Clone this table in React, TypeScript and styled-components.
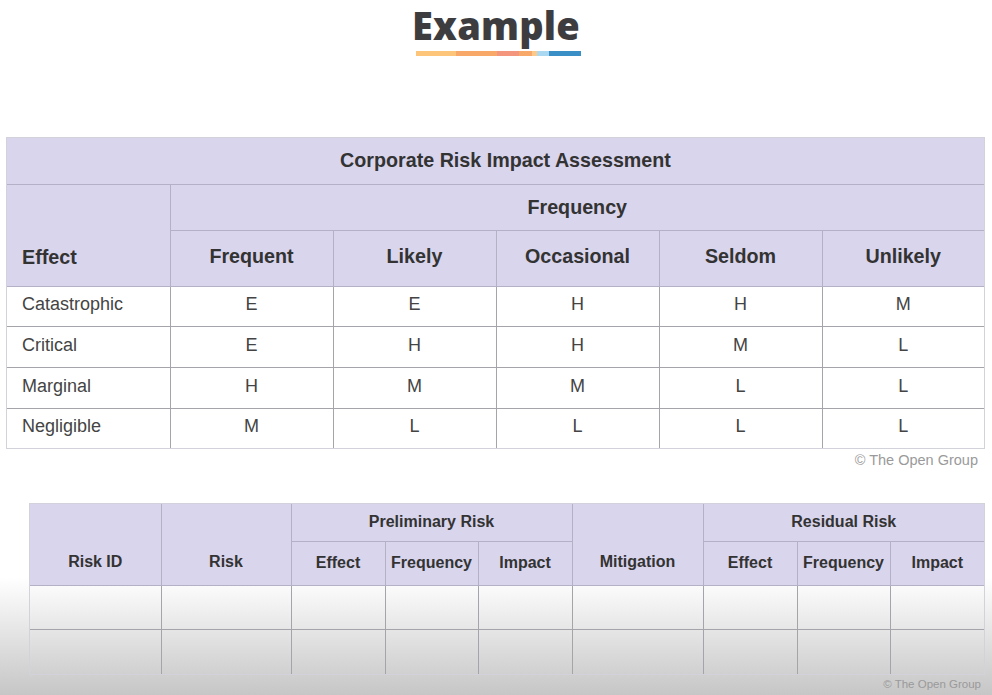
import React from 'react';
import styled, { createGlobalStyle } from 'styled-components';

const GlobalStyle = createGlobalStyle`
  html, body {
    margin: 0;
    padding: 0;
    background: #ffffff;
  }
  body {
    font-family: "Liberation Sans", Arial, sans-serif;
  }
`;

const colors = {
  header: '#d9d5ec',
  headerText: '#333333',
  bodyText: '#444444',
  innerLine: '#a4a4aa',
  headerLine: '#b4b1c6',
  outerLine: '#d2d2da',
  muted: '#9a9a9a',
};

const Page = styled.div`
  width: 992px;
  min-height: 695px;
  box-sizing: border-box;
  padding-top: 2px;
  background: linear-gradient(to bottom, #ffffff 0, #ffffff 578px, #c6c6c6 695px);
  overflow: hidden;
`;

const TitleBlock = styled.div`
  display: flex;
  flex-direction: column;
  align-items: center;
`;

const Title = styled.h1`
  margin: 0;
  font-family: "Open Sans", sans-serif;
  font-weight: 800;
  font-size: 38px;
  line-height: 46px;
  color: #3d3d3f;
  letter-spacing: 0.2px;
`;

const Underline = styled.div`
  display: flex;
  width: 165px;
  height: 5px;
  margin-top: 3px;
  margin-left: 4px;
`;

const Segment = styled.span<{ $w: number; $c: string }>`
  width: ${p => p.$w}px;
  background: ${p => p.$c};
`;

const Frame = styled.div<{ $left: number; $top: number }>`
  margin-left: ${p => p.$left}px;
  margin-top: ${p => p.$top}px;
  width: fit-content;
  border: 1px solid ${colors.outerLine};
`;

const Table = styled.table`
  border-collapse: collapse;
  border-style: hidden;
  table-layout: fixed;
`;

const HeadCell = styled.th<{ $h?: number; $align?: string; $valign?: string; $pb?: number; $pl?: number; $size?: number }>`
  height: ${p => p.$h ?? 40}px;
  padding: 0 0 ${p => p.$pb ?? 0}px ${p => p.$pl ?? (p.$align === 'left' ? 15 : 0)}px;
  box-sizing: border-box;
  background: ${colors.header};
  border: 1px solid ${colors.headerLine};
  color: ${colors.headerText};
  font-weight: 700;
  font-size: ${p => p.$size ?? 19.7}px;
  text-align: ${p => p.$align ?? 'center'};
  vertical-align: ${p => p.$valign ?? 'middle'};
  white-space: nowrap;
`;

const DataCell = styled.td<{ $h?: number; $align?: string }>`
  height: ${p => p.$h ?? 40}px;
  padding: 0 0 3px ${p => (p.$align === 'left' ? 15 : 0)}px;
  box-sizing: border-box;
  border: 1px solid ${colors.innerLine};
  color: ${colors.bodyText};
  font-size: 18px;
  text-align: ${p => p.$align ?? 'center'};
  vertical-align: middle;
  white-space: nowrap;
`;

const Credit = styled.div<{ $size: number; $right: number; $top: number }>`
  margin-top: ${p => p.$top}px;
  padding-right: ${p => p.$right}px;
  text-align: right;
  font-size: ${p => p.$size}px;
  line-height: ${p => p.$size + 3}px;
  color: ${colors.muted};
`;

const frequencies = ['Frequent', 'Likely', 'Occasional', 'Seldom', 'Unlikely'];

const matrix: { effect: string; values: string[]; h: number }[] = [
  { effect: 'Catastrophic', values: ['E', 'E', 'H', 'H', 'M'], h: 40 },
  { effect: 'Critical', values: ['E', 'H', 'H', 'M', 'L'], h: 41 },
  { effect: 'Marginal', values: ['H', 'M', 'M', 'L', 'L'], h: 41 },
  { effect: 'Negligible', values: ['M', 'L', 'L', 'L', 'L'], h: 40 },
];

const registerCols = [131, 130, 94, 93, 94, 131, 94, 93, 94];

const App: React.FC = () => {
  return (
    <>
      <GlobalStyle />
      <Page>
        <TitleBlock>
          <Title>Example</Title>
          <Underline>
            <Segment $w={40} $c="#fdc57a" />
            <Segment $w={41} $c="#f8a868" />
            <Segment $w={22} $c="#f4967e" />
            <Segment $w={13} $c="#f8a868" />
            <Segment $w={5} $c="#fcc98a" />
            <Segment $w={12} $c="#aad8f0" />
            <Segment $w={32} $c="#3a8fc6" />
          </Underline>
        </TitleBlock>

        <Frame $left={6} $top={81}>
          <Table>
            <colgroup>
              {Array.from({ length: 6 }).map((_, i) => (
                <col key={i} style={{ width: i === 5 ? 162 : 163 }} />
              ))}
            </colgroup>
            <thead>
              <tr>
                <HeadCell colSpan={6} $h={46} $pl={20}>Corporate Risk Impact Assessment</HeadCell>
              </tr>
              <tr>
                <HeadCell rowSpan={2} $align="left" $valign="bottom" $pb={17}>Effect</HeadCell>
                <HeadCell colSpan={5} $h={46}>Frequency</HeadCell>
              </tr>
              <tr>
                {frequencies.map(f => (
                  <HeadCell key={f} $h={56} $pb={4}>{f}</HeadCell>
                ))}
              </tr>
            </thead>
            <tbody>
              {matrix.map(row => (
                <tr key={row.effect}>
                  <DataCell $h={row.h} $align="left">{row.effect}</DataCell>
                  {row.values.map((v, i) => (
                    <DataCell key={i} $h={row.h}>{v}</DataCell>
                  ))}
                </tr>
              ))}
            </tbody>
          </Table>
        </Frame>
        <Credit $size={14.5} $right={14} $top={3}>© The Open Group</Credit>

        <Frame $left={29} $top={33}>
          <Table>
            <colgroup>
              {registerCols.map((w, i) => (
                <col key={i} style={{ width: w }} />
              ))}
            </colgroup>
            <thead>
              <tr>
                <HeadCell rowSpan={2} $size={16} $valign="bottom" $pb={14}>Risk ID</HeadCell>
                <HeadCell rowSpan={2} $size={16} $valign="bottom" $pb={14}>Risk</HeadCell>
                <HeadCell colSpan={3} $size={16} $h={38}>Preliminary Risk</HeadCell>
                <HeadCell rowSpan={2} $size={16} $valign="bottom" $pb={14}>Mitigation</HeadCell>
                <HeadCell colSpan={3} $size={16} $h={38}>Residual Risk</HeadCell>
              </tr>
              <tr>
                {['Effect', 'Frequency', 'Impact', 'Effect', 'Frequency', 'Impact'].map((t, i) => (
                  <HeadCell key={i} $size={16} $h={44} $pb={1}>{t}</HeadCell>
                ))}
              </tr>
            </thead>
            <tbody>
              {[0, 1].map(r => (
                <tr key={r}>
                  {registerCols.map((_, i) => (
                    <DataCell key={i} $h={44} />
                  ))}
                </tr>
              ))}
            </tbody>
          </Table>
        </Frame>
        <Credit $size={11.5} $right={11} $top={2}>© The Open Group</Credit>
      </Page>
    </>
  );
};

export default App;
